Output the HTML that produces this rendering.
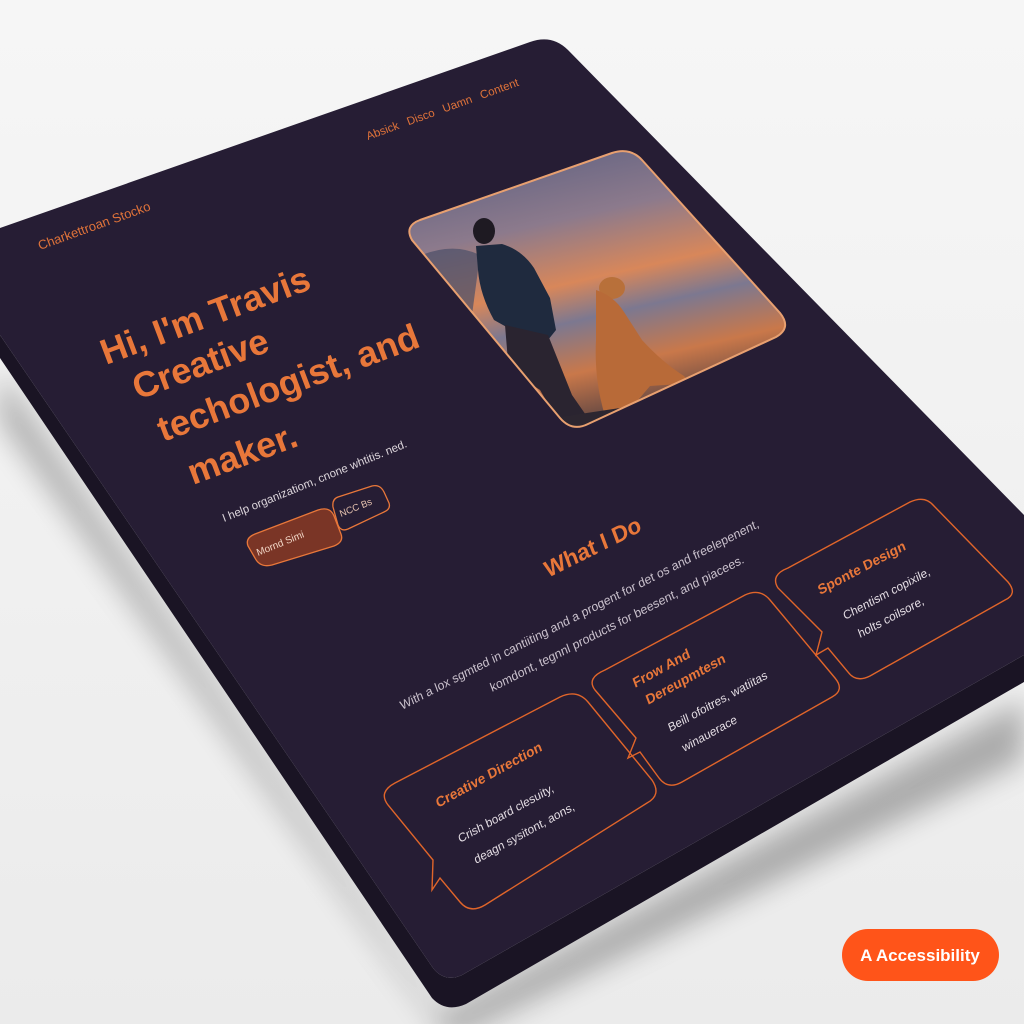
<!DOCTYPE html>
<html><head><meta charset="utf-8"><style>
html,body{margin:0;padding:0;width:1024px;height:1024px;overflow:hidden;background:#f0f0f0}
svg{display:block}
text{font-family:"Liberation Sans",sans-serif}
</style></head><body>
<svg width="1024" height="1024" viewBox="0 0 1024 1024" xmlns="http://www.w3.org/2000/svg">
<defs>
<linearGradient id="bg" x1="0" y1="0" x2="0" y2="1"><stop offset="0" stop-color="#f6f6f6"/><stop offset="1" stop-color="#ebebeb"/></linearGradient>
<linearGradient id="sky" x1="0.2" y1="0" x2="0.5" y2="1"><stop offset="0" stop-color="#5a5e80"/><stop offset="0.3" stop-color="#8c7a8c"/><stop offset="0.5" stop-color="#d8875a"/><stop offset="0.62" stop-color="#7c7890"/><stop offset="0.78" stop-color="#c9784a"/><stop offset="1" stop-color="#3a3440"/></linearGradient>
<clipPath id="ph"><path d="M420,220 L612,153 Q630,147 642,160 L780,313 Q792,328 776,337 L588,424 Q572,432 560,418 L412,240 Q404,226 420,220 Z"/></clipPath>
<filter id="bl" x="-20%" y="-20%" width="140%" height="140%"><feGaussianBlur stdDeviation="14"/></filter>
</defs>
<rect width="1024" height="1024" fill="url(#bg)"/>
<path d="M0,370 L440,1015 L1024,700 L1024,760 L450,1040 L0,420Z" fill="#000" opacity="0.28" filter="url(#bl)"/>
<path d="M0,335 L433,968 Q445,983 462,975 L1024,655 L1024,682 L466,1004 Q446,1013 432,998 L0,358 Z" fill="#1a1424"/>
<path d="M0,228 L530,42 Q552,34 568,50 L1024,515 L1024,655 L462,975 Q445,983 433,968 L0,335 Z" fill="#261d34"/>

<text transform="translate(40,250) matrix(0.941,-0.339,0.35,0.93,0,0)" font-size="13" fill="#e0733a">Charkettroan Stocko</text>
<text transform="translate(368,140) matrix(0.941,-0.339,0.35,0.93,0,0)" font-size="11.5" fill="#e0733a" word-spacing="6">Absick  Disco  Uamn  Content</text>

<g font-weight="bold" font-size="36" fill="#e8773a">
<text transform="translate(106,365) matrix(0.938,-0.347,0.35,0.93,0,0)">Hi, I'm Travis</text>
<text transform="translate(138,400) matrix(0.938,-0.347,0.35,0.93,0,0)">Creative</text>
<text transform="translate(163,442) matrix(0.938,-0.347,0.35,0.93,0,0)">techologist, and</text>
<text transform="translate(193,485) matrix(0.938,-0.347,0.35,0.93,0,0)">maker.</text>
</g>
<text transform="translate(224,522) matrix(0.925,-0.379,0.35,0.93,0,0)" font-size="11.5" fill="#ddd6dc">I help organizatiom, cnone whtitis. ned.</text>

<path d="M255,534 L318,510 Q330,506 334,516 L341,534 Q344,542 334,546 L272,565 Q260,568 255,558 L248,546 Q245,538 255,534 Z" fill="#7a3526" stroke="#e8773a" stroke-width="1.3"/>
<text transform="translate(258,556) matrix(0.925,-0.379,0.35,0.93,0,0)" font-size="10" fill="#f0d4c4">Mornd Simi</text>
<path d="M338,497 L372,486 Q380,484 384,492 L389,503 Q391,509 384,512 L348,529 Q341,532 338,525 L333,507 Q332,499 338,497 Z" fill="none" stroke="#e8773a" stroke-width="1.3"/>
<text transform="translate(341,517) matrix(0.925,-0.379,0.35,0.93,0,0)" font-size="9.5" fill="#e8c4b0">NCC Bs</text>

<g clip-path="url(#ph)">
<rect x="400" y="140" width="400" height="300" fill="url(#sky)"/>
<path d="M410,260 Q450,240 480,255 L470,330 L420,300Z" fill="#4a4e68" opacity="0.7"/>
<ellipse cx="484" cy="231" rx="11" ry="13" fill="#1e1a22"/>
<path d="M476,246 L502,244 Q522,250 534,268 L550,298 L556,330 L548,340 L528,335 L512,330 L494,320 Q480,295 478,270 Z" fill="#1f2a3e"/>
<path d="M505,325 L548,335 L572,395 L588,418 L560,424 L540,390 L525,380 L528,405 L512,410 Z" fill="#2a2430"/>
<ellipse cx="612" cy="288" rx="13" ry="11" fill="#b8703a"/>
<path d="M596,290 Q614,296 624,312 L642,340 Q662,362 684,376 Q690,382 680,384 L650,386 L628,412 L605,416 Q594,380 596,340 Z" fill="#b86a38"/>
<path d="M540,420 L620,408 L700,378 L800,400 L800,440 L540,440Z" fill="#2c2630"/>
</g>
<path d="M420,220 L612,153 Q630,147 642,160 L780,313 Q792,328 776,337 L588,424 Q572,432 560,418 L412,240 Q404,226 420,220 Z" fill="none" stroke="#e8a070" stroke-width="2"/>

<text transform="translate(548,578) matrix(0.894,-0.447,0.35,0.93,0,0)" font-size="23" font-weight="bold" fill="#e8773a">What I Do</text>
<text transform="translate(402,710) matrix(0.89,-0.456,0.35,0.93,0,0)" font-size="12.5" fill="#c9c0cc">With a lox sgmted in cantiiting and a progent for det os and freelepenent,</text>
<text transform="translate(492,692) matrix(0.89,-0.456,0.35,0.93,0,0)" font-size="12.5" fill="#c9c0cc">komdont, tegnnl products for beesent, and piacees.</text>

<g fill="none" stroke="#e0652a" stroke-width="1.4">
<path d="M395,783 L560,697 Q577,689 588,702 L652,780 Q662,795 647,803 L485,905 Q470,914 460,902 L440,878 L432,890 L433,860 L388,805 Q378,792 395,783 Z"/>
<path d="M605,670 L745,595 Q760,588 770,600 L835,678 Q845,690 832,697 L682,782 Q668,790 659,778 L640,752 L628,758 L636,738 L595,690 Q586,678 605,670 Z"/>
<path d="M788,568 L910,502 Q925,495 934,506 L1008,582 Q1018,594 1005,600 L870,676 Q856,683 848,672 L828,648 L816,655 L822,632 L778,588 Q770,575 788,568 Z"/>
</g>
<g font-weight="bold" font-size="14" fill="#e8773a">
<text transform="translate(438,808) matrix(0.876,-0.482,0.35,0.93,0,0)">Creative Direction</text>
<text transform="translate(635,688) matrix(0.876,-0.482,0.35,0.93,0,0)">Frow And</text>
<text transform="translate(648,705) matrix(0.876,-0.482,0.35,0.93,0,0)">Dereupmtesn</text>
<text transform="translate(820,595) matrix(0.884,-0.468,0.35,0.93,0,0)">Sponte Design</text>
</g>
<g font-size="12" fill="#e4dde4">
<text transform="translate(460,843) matrix(0.876,-0.482,0.35,0.93,0,0)">Crish board clesuity,</text>
<text transform="translate(476,864) matrix(0.876,-0.482,0.35,0.93,0,0)">deagn sysitont, aons,</text>
<text transform="translate(670,732) matrix(0.876,-0.482,0.35,0.93,0,0)">Beill ofoitres, watiitas</text>
<text transform="translate(684,752) matrix(0.876,-0.482,0.35,0.93,0,0)">winauerace</text>
<text transform="translate(845,620) matrix(0.884,-0.468,0.35,0.93,0,0)">Chentism copixile,</text>
<text transform="translate(860,638) matrix(0.884,-0.468,0.35,0.93,0,0)">holts coilsore,</text>
</g>

<rect x="842" y="929" width="157" height="52" rx="26" fill="#ff5419"/>
<text x="920" y="961" text-anchor="middle" font-size="17" font-weight="bold" fill="#fff">A Accessibility</text>
</svg>
</body></html>
